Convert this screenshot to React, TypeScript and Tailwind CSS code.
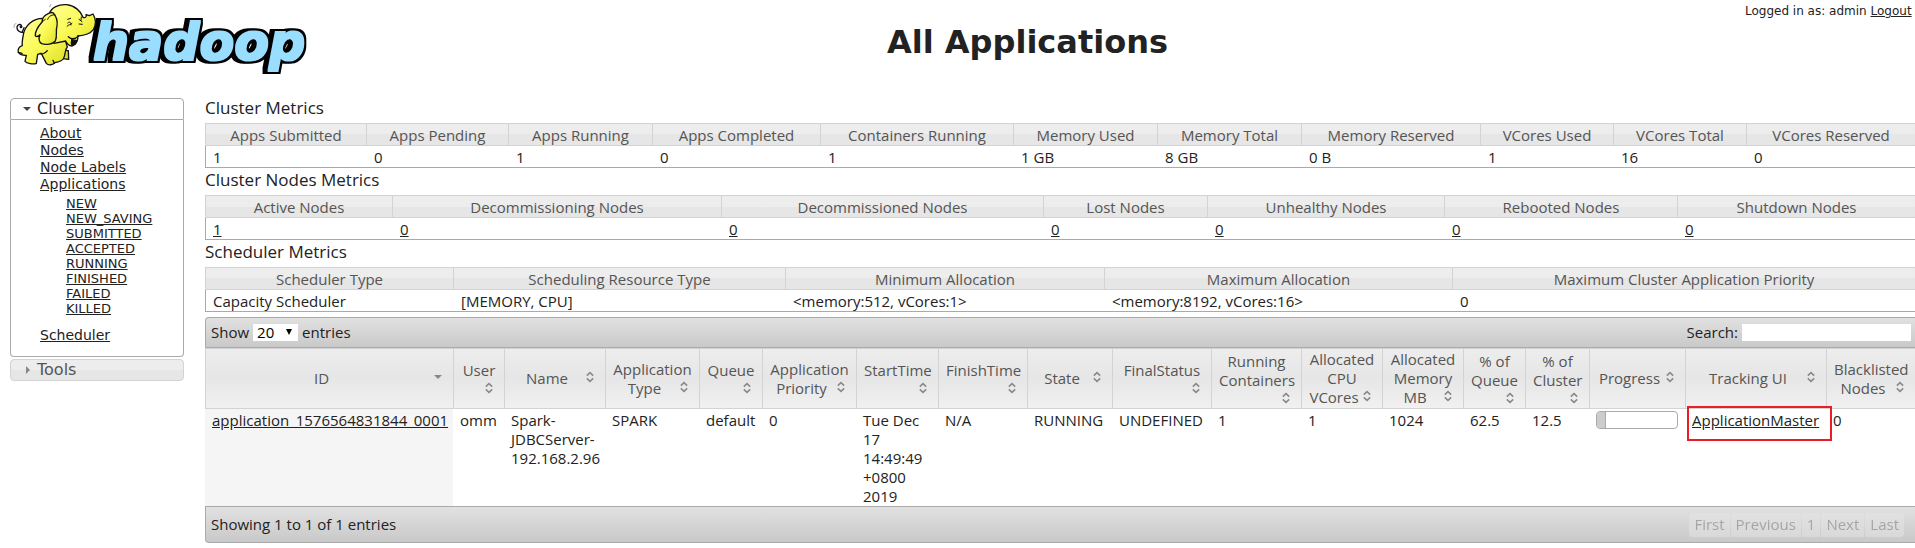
import React from "react";

type Column = { label: string; width: number };
type SortColumn = { lines: string[]; width: number; sorted?: boolean };

const CLUSTER_METRICS: Column[] = [
  { label: "Apps Submitted", width: 161 },
  { label: "Apps Pending", width: 142 },
  { label: "Apps Running", width: 144 },
  { label: "Apps Completed", width: 168 },
  { label: "Containers Running", width: 193 },
  { label: "Memory Used", width: 144 },
  { label: "Memory Total", width: 144 },
  { label: "Memory Reserved", width: 179 },
  { label: "VCores Used", width: 133 },
  { label: "VCores Total", width: 133 },
  { label: "VCores Reserved", width: 169 },
];

const NODE_METRICS: Column[] = [
  { label: "Active Nodes", width: 187 },
  { label: "Decommissioning Nodes", width: 329 },
  { label: "Decommissioned Nodes", width: 322 },
  { label: "Lost Nodes", width: 164 },
  { label: "Unhealthy Nodes", width: 237 },
  { label: "Rebooted Nodes", width: 233 },
  { label: "Shutdown Nodes", width: 238 },
];

const SCHEDULER_METRICS: Column[] = [
  { label: "Scheduler Type", width: 248 },
  { label: "Scheduling Resource Type", width: 332 },
  { label: "Minimum Allocation", width: 319 },
  { label: "Maximum Allocation", width: 348 },
  { label: "Maximum Cluster Application Priority", width: 463 },
];

const APP_COLUMNS: SortColumn[] = [
  { lines: ["ID"], width: 248, sorted: true },
  { lines: ["User"], width: 51 },
  { lines: ["Name"], width: 101 },
  { lines: ["Application", "Type"], width: 94 },
  { lines: ["Queue"], width: 63 },
  { lines: ["Application", "Priority"], width: 94 },
  { lines: ["StartTime"], width: 82 },
  { lines: ["FinishTime"], width: 89 },
  { lines: ["State"], width: 85 },
  { lines: ["FinalStatus"], width: 99 },
  { lines: ["Running", "Containers"], width: 90 },
  { lines: ["Allocated", "CPU", "VCores"], width: 81 },
  { lines: ["Allocated", "Memory", "MB"], width: 81 },
  { lines: ["% of", "Queue"], width: 62 },
  { lines: ["% of", "Cluster"], width: 64 },
  { lines: ["Progress"], width: 96 },
  { lines: ["Tracking UI"], width: 141 },
  { lines: ["Blacklisted", "Nodes"], width: 89 },
];

const APP_STATES = ["NEW", "NEW_SAVING", "SUBMITTED", "ACCEPTED", "RUNNING", "FINISHED", "FAILED", "KILLED"];

function ColumnWidths({ widths }: { widths: number[] }) {
  const total = widths.reduce((sum, w) => sum + w, 0);
  return (
    <colgroup>
      {widths.map((w, i) => (
        <col key={i} style={{ width: `${(w / total) * 100}%` }} />
      ))}
    </colgroup>
  );
}

function MetricsTable({ title, columns, values, linked }: { title: string; columns: Column[]; values: string[]; linked?: boolean }) {
  return (
    <section>
      <h2 className="h-[27px] text-[17px] leading-6">{title}</h2>
      <table className="w-full table-fixed border-separate border-spacing-0">
        <ColumnWidths widths={columns.map((c) => c.width)} />
        <thead>
          <tr>
            {columns.map((c) => (
              <th
                key={c.label}
                className="h-[23px] whitespace-nowrap border-y border-l border-[#d3d3d3] bg-linear-to-b from-[#ededed] from-50% to-[#e6e6e6] to-50% px-0 pb-0 pt-[2px] text-center font-normal leading-[19px] text-[#555555]"
              >
                {c.label}
              </th>
            ))}
          </tr>
        </thead>
        <tbody>
          <tr>
            {values.map((v, i) => (
              <td key={i} className="h-[22px] whitespace-nowrap border-b border-[#aaaaaa] pb-0 pl-2 pt-[2px] leading-[19px] first:border-l first:pl-[7px]">
                {linked ? (
                  <a href="#nodes" className="underline">
                    {v}
                  </a>
                ) : (
                  v
                )}
              </td>
            ))}
          </tr>
        </tbody>
      </table>
    </section>
  );
}

function SortIcon({ sorted }: { sorted?: boolean }) {
  return (
    <svg className="float-right h-4 w-4" viewBox="0 0 16 16" aria-hidden="true">
      {sorted ? (
        <path d="M4 6h8l-4 4z" fill="#888888" />
      ) : (
        <path d="M4.8 6.6 8 3.6l3.2 3M4.8 9.4 8 12.4l3.2-3" fill="none" stroke="#888888" strokeWidth="1.5" />
      )}
    </svg>
  );
}

function HadoopLogo() {
  return (
    <svg className="block h-[75px] w-[330px] shrink-0" viewBox="0 0 990 225" role="img" aria-label="Hadoop">
      <defs>
        <linearGradient id="skin" x1="0" y1="0" x2="1" y2="1">
          <stop offset="0" stopColor="#ffff9a" />
          <stop offset="0.5" stopColor="#fbfb58" />
          <stop offset="1" stopColor="#dede28" />
        </linearGradient>
        <filter id="bevel" x="-10%" y="-10%" width="120%" height="120%" colorInterpolationFilters="sRGB">
          <feMorphology in="SourceGraphic" operator="dilate" radius="3" result="face" />
          <feMorphology in="SourceAlpha" operator="dilate" radius="9" result="edge" />
          <feOffset in="edge" dx="-9" dy="0" result="side" />
          <feMerge>
            <feMergeNode in="side" />
            <feMergeNode in="edge" />
            <feMergeNode in="face" />
          </feMerge>
        </filter>
      </defs>
      <text
        x="279"
        y="180"
        fill="#99ddff"
        filter="url(#bevel)"
        fontFamily="DejaVu Sans, sans-serif"
        fontWeight="bold"
        fontStyle="italic"
        fontSize="152"
      >
        hadoop
      </text>
      <g stroke="#111" strokeWidth="4" strokeLinejoin="round" strokeLinecap="round">
        <path d="M183 150 188 176 206 178 205 152z" fill="#d9d92a" />
        <path
          d="M128 55C98 55 74 78 70 104C66 126 66 133 67 137C58 139 52 148 55 157C60 163 69 167 79 166L75 184C80 190 101 194 109 190L113 163L124 160L139 190C145 197 160 195 165 188C178 185 190 180 191 174C197 165 193 150 202 141L196 121L162 125L150 60z"
          fill="url(#skin)"
        />
        <path d="M142 152C136 160 126 164 120 160M163 190 159 181M55 157 66 160" fill="none" />
        <path
          d="M148 41C153 22 177 12 200 14C225 17 243 34 249 52C256 55 261 50 258 44L268 47L279 42C288 57 288 75 280 89C269 104 247 107 233 108C236 120 227 134 216 138C206 137 200 130 197 123L162 130L142 70z"
          fill="url(#skin)"
        />
        <path d="M215 119 231 122C229 130 223 136 216 136C211 131 216 126 215 119z" fill="#111" />
        <path d="M205 110C213 118 224 119 236 108" fill="none" />
        <path
          d="M146 40C131 46 126 54 126 66C113 81 105 99 106 108C112 111 117 108 120 104C116 114 116 125 125 131C138 136 159 132 166 123C173 108 166 92 171 79C173 65 169 49 160 39C155 36 150 38 146 40z"
          fill="url(#skin)"
        />
        <path d="M143 58C147 47 157 43 165 45M126 66 136 58" fill="none" strokeWidth="3" />
        <path d="M203 69C208 63 214 67 213 75M201 79C206 72 211 76 216 70M203 58 212 55M237 58 246 65M237 72 247 73M244 51 243 61" fill="none" strokeWidth="3" />
        <path d="M70 98C59 97 50 92 51 81C53 72 63 71 65 78C67 84 60 85 61 79M67 95 72 83" fill="none" />
        <path d="M48 70 43 75 42 82M153 13 149 20" fill="none" stroke="#777" strokeWidth="2" />
      </g>
    </svg>
  );
}

function Sidebar() {
  return (
    <nav className="w-[174px] shrink-0 pt-[2px] font-['DejaVu_Sans',Verdana,sans-serif] text-sm leading-[17px]">
      <h3>
        <button type="button" className="flex h-[22px] w-full items-center rounded-t border border-[#aaaaaa] bg-white pl-3 text-left text-base">
          <svg className="mr-[6px] h-2 w-2" viewBox="0 0 8 8" aria-hidden="true">
            <path d="M0 2h8L4 6z" fill="#454545" />
          </svg>
          Cluster
        </button>
      </h3>
      <div className="rounded-b border border-t-0 border-[#aaaaaa] pb-[12px] pl-[29px] pt-[5px]">
        <ul>
          <li><a href="#about" className="underline">About</a></li>
          <li><a href="#nodes" className="underline">Nodes</a></li>
          <li><a href="#labels" className="underline">Node Labels</a></li>
          <li>
            <a href="#apps" className="underline">Applications</a>
            <ul className="pb-[11px] pl-[26px] pt-[3px] text-[13px] leading-[15px]">
              {APP_STATES.map((s) => (
                <li key={s}>
                  <a href={`#apps-${s}`} className="underline">{s}</a>
                </li>
              ))}
            </ul>
          </li>
          <li><a href="#scheduler" className="underline">Scheduler</a></li>
        </ul>
      </div>
      <h3>
        <button type="button" className="mt-[2px] flex h-[22px] w-full items-center rounded border border-[#d3d3d3] bg-linear-to-b from-[#ededed] from-50% to-[#e6e6e6] to-50% pl-3 text-left text-base text-[#555555]">
          <svg className="mr-[6px] h-2 w-2" viewBox="0 0 8 8" aria-hidden="true">
            <path d="M3 0v8l4-4z" fill="#888888" />
          </svg>
          Tools
        </button>
      </h3>
    </nav>
  );
}

function ApplicationsTable() {
  const cell = "whitespace-nowrap pb-0 pl-[7px] pr-0 pt-[2px] align-top";
  return (
    <section className="mt-[5px]">
      <div className="flex h-[31px] items-center justify-between rounded-tl border border-r-0 border-[#aaaaaa] bg-linear-to-b from-[#e1e1e1] to-[#c9c9c9] pl-[5px] pr-1">
        <label className="flex items-center">
          Show
          <span className="relative mx-1 flex">
            <select defaultValue="20" className="h-[17px] w-[45px] appearance-none bg-white pl-1 leading-[17px] text-black">
              <option>20</option>
              <option>40</option>
              <option>60</option>
              <option>80</option>
              <option>100</option>
            </select>
            <svg className="pointer-events-none absolute right-[6px] top-[5px] h-[6px] w-[6px]" viewBox="0 0 6 6" aria-hidden="true">
              <path d="M0 0h6L3 6z" fill="#000" />
            </svg>
          </span>
          entries
        </label>
        <label className="flex items-center gap-1">
          Search:
          <input type="text" className="h-[17px] w-[169px] bg-white px-1 outline-none" />
        </label>
      </div>

      <table className="w-full table-fixed border-separate border-spacing-0">
        <ColumnWidths widths={APP_COLUMNS.map((c) => c.width)} />
        <thead>
          <tr className="h-[61px]">
            {APP_COLUMNS.map((c) => (
              <th
                key={c.lines.join(" ")}
                className="whitespace-nowrap border-y border-l border-[#d3d3d3] bg-linear-to-b from-[#ededed] via-[#e6e6e6] to-[#f1f1f1] py-0 pl-[7px] pr-[7px] text-center align-middle font-normal text-[#555555]"
              >
                <div className="flow-root">
                  {c.lines.map((line, i) => (
                    <React.Fragment key={line}>
                      {i > 0 && <br />}
                      {line}
                    </React.Fragment>
                  ))}
                  <SortIcon sorted={c.sorted} />
                </div>
              </th>
            ))}
          </tr>
        </thead>
        <tbody>
          <tr className="h-[97px]">
            <td className={`${cell} bg-[#f5f5f5]`}>
              <a href="#application" className="underline">application_1576564831844_0001</a>
            </td>
            <td className={cell}>omm</td>
            <td className={cell}>Spark-<br />JDBCServer-<br />192.168.2.96</td>
            <td className={cell}>SPARK</td>
            <td className={cell}>default</td>
            <td className={cell}>0</td>
            <td className={cell}>Tue Dec<br />17<br />14:49:49<br />+0800<br />2019</td>
            <td className={cell}>N/A</td>
            <td className={cell}>RUNNING</td>
            <td className={cell}>UNDEFINED</td>
            <td className={cell}>1</td>
            <td className={cell}>1</td>
            <td className={cell}>1024</td>
            <td className={cell}>62.5</td>
            <td className={cell}>12.5</td>
            <td className={cell}>
              <div className="mr-[7px] h-[18px] overflow-hidden rounded border border-[#aaaaaa] bg-white" role="progressbar" aria-label="Progress" aria-valuenow={10}>
                <div className="h-full w-[11%] border-r border-[#aaaaaa] bg-[#cccccc]" />
              </div>
            </td>
            <td className={cell}>
              <span className="relative inline-block">
                <a href="#master" className="underline">ApplicationMaster</a>
                <span className="pointer-events-none absolute -bottom-[11px] -left-[5px] -right-[13px] -top-[5px] border-2 border-[#ed1c24]" />
              </span>
            </td>
            <td className={cell}>0</td>
          </tr>
        </tbody>
      </table>

      <div className="flex h-[37px] items-center justify-between rounded-bl border border-r-0 border-[#aaaaaa] bg-linear-to-b from-[#e1e1e1] to-[#c9c9c9] pl-[5px] pr-[11px]">
        <span>Showing 1 to 1 of 1 entries</span>
        <div className="flex gap-px opacity-50">
          {["First", "Previous", "1", "Next", "Last"].map((p) => (
            <button
              key={p}
              type="button"
              disabled
              className="h-6 bg-[#e6e6e6] px-[5px] text-[#777777] first:rounded-l last:rounded-r"
            >
              {p}
            </button>
          ))}
        </div>
      </div>
    </section>
  );
}

export default function App() {
  return (
    <div className="overflow-x-hidden bg-white font-['Open_Sans','Noto_Sans',sans-serif] text-[15px] leading-[19px] text-[#222222]">
      <header className="flex h-24 items-start font-['DejaVu_Sans',Verdana,sans-serif]">
        <HadoopLogo />
        <h1 className="flex-1 pr-5 pt-6 text-center text-[32px] font-bold leading-9">All Applications</h1>
        <div className="w-[170px] shrink-0 whitespace-nowrap pt-[3px] text-xs leading-4">
          Logged in as: admin <a href="#logout" className="underline">Logout</a>
        </div>
      </header>
      <div className="flex gap-[21px] pl-[10px]">
        <Sidebar />
        <main className="min-w-0 flex-1">
          <MetricsTable
            title="Cluster Metrics"
            columns={CLUSTER_METRICS}
            values={["1", "0", "1", "0", "1", "1 GB", "8 GB", "0 B", "1", "16", "0"]}
          />
          <MetricsTable title="Cluster Nodes Metrics" columns={NODE_METRICS} values={["1", "0", "0", "0", "0", "0", "0"]} linked />
          <MetricsTable
            title="Scheduler Metrics"
            columns={SCHEDULER_METRICS}
            values={["Capacity Scheduler", "[MEMORY, CPU]", "<memory:512, vCores:1>", "<memory:8192, vCores:16>", "0"]}
          />
          <ApplicationsTable />
        </main>
      </div>
    </div>
  );
}
